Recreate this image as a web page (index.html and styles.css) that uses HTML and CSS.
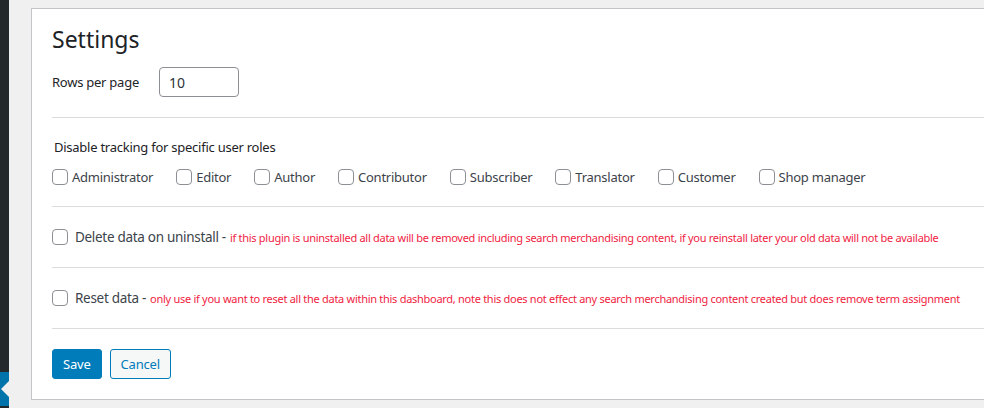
FILE: index.html
```html
<!DOCTYPE html>
<html>
<head>
<meta charset="utf-8">
<link rel="stylesheet" href="styles.css">
</head>
<body>
<div class="layout">
  <aside class="sidebar">
    <div class="sidebar-fill"></div>
    <div class="sidebar-current"><span class="arrow"></span></div>
    <div class="sidebar-foot"></div>
  </aside>
  <main class="content">
    <section class="card">
      <h1 class="title">Settings</h1>
      <div class="rows-field">
        <label class="rows-label">Rows per page</label>
        <input class="rows-input" type="text" value="10">
      </div>
      <hr class="sep">
      <div class="roles">
        <p class="roles-title">Disable tracking for specific user roles</p>
        <div class="roles-list">
          <label class="role"><span class="cb"></span>Administrator</label>
          <label class="role"><span class="cb"></span>Editor</label>
          <label class="role"><span class="cb"></span>Author</label>
          <label class="role"><span class="cb"></span>Contributor</label>
          <label class="role"><span class="cb"></span>Subscriber</label>
          <label class="role"><span class="cb"></span>Translator</label>
          <label class="role"><span class="cb"></span>Customer</label>
          <label class="role"><span class="cb"></span>Shop manager</label>
        </div>
      </div>
      <hr class="sep">
      <div class="option"><span class="cb cb-lg"></span><span class="opt-label">Delete data on uninstall -</span><span class="warn">if this plugin is uninstalled all data will be removed including search merchandising content, if you reinstall later your old data will not be available</span></div>
      <hr class="sep">
      <div class="option"><span class="cb cb-lg"></span><span class="opt-label">Reset data -</span><span class="warn">only use if you want to reset all the data within this dashboard, note this does not effect any search merchandising content created but does remove term assignment</span></div>
      <hr class="sep">
      <div class="actions">
        <button class="btn btn-primary">Save</button>
        <button class="btn btn-secondary">Cancel</button>
      </div>
    </section>
  </main>
</div>
</body>
</html>
```
FILE: styles.css
```css
html, body {
  margin: 0;
  padding: 0;
  height: 100%;
  overflow: hidden;
  background: #f0f0f1;
  font-family: "Noto Sans", "Open Sans", sans-serif;
  color: #3c434a;
}
.layout {
  display: flex;
  height: 408px;
}
.sidebar {
  width: 9px;
  flex: none;
  display: flex;
  flex-direction: column;
  background: #23282d;
}
.sidebar-fill { flex: 1; }
.sidebar-current {
  height: 34px;
  background: #0073aa;
  position: relative;
}
.sidebar-foot { height: 2px; }
.sidebar-current .arrow {
  position: absolute;
  left: 1px;
  top: 9px;
  width: 0;
  height: 0;
  border-top: 8px solid transparent;
  border-bottom: 8px solid transparent;
  border-right: 8px solid #f0f0f1;
}
.content {
  flex: 1;
  padding: 8px 0 0 22px;
  min-width: 0;
}
.card {
  width: 1100px;
  height: 392px;
  box-sizing: border-box;
  background: #fff;
  border: 1px solid #c3c4c7;
  padding: 14px 0 0 20px;
}
.title {
  margin: 0;
  font-size: 23px;
  font-weight: 400;
  color: #1d2327;
  line-height: 32px;
}
.rows-field {
  display: flex;
  align-items: center;
  margin-top: 12px;
}
.rows-label {
  font-size: 13px;
  letter-spacing: -0.25px;
  width: 107px;
  color: #1d2327;
}
.rows-input {
  width: 80px;
  height: 30px;
  box-sizing: border-box;
  border: 1px solid #8c8f94;
  border-radius: 4px;
  padding: 0 9px;
  font-family: inherit;
  font-size: 14px;
  color: #2c3338;
}
.sep {
  border: 0;
  border-top: 1px solid #dcdcde;
  margin: 0;
}
.rows-field + .sep { margin-top: 20px; }
.roles { padding: 20px 0 20px 0; }
.roles-title {
  margin: 0 0 0 2px;
  font-size: 13px;
  letter-spacing: -0.25px;
  color: #1d2327;
  line-height: 18px;
}
.roles-list {
  display: flex;
  margin-top: 12px;
}
.role {
  display: flex;
  align-items: center;
  font-size: 13px;
  letter-spacing: -0.25px;
  color: #3c434a;
  margin-right: 23px;
}
.cb {
  width: 16px;
  height: 16px;
  box-sizing: border-box;
  border: 1px solid #8c8f94;
  border-radius: 4px;
  background: #fff;
  margin-right: 4px;
  flex: none;
}
.option {
  display: flex;
  align-items: center;
  height: 60px;
}
.cb-lg { margin-right: 7px; }
.opt-label {
  font-size: 13.5px;
  letter-spacing: -0.3px;
  color: #3c434a;
  margin-right: 4px;
}
.warn {
  font-size: 11px;
  letter-spacing: -0.28px;
  color: #f0233f;
  white-space: nowrap;
}
.actions {
  display: flex;
  gap: 8px;
  padding-top: 20px;
}
.btn {
  height: 30px;
  box-sizing: border-box;
  border-radius: 3px;
  font-family: inherit;
  font-size: 13px;
  letter-spacing: -0.2px;
  padding: 0 10px;
  cursor: pointer;
}
.btn-primary {
  background: #007cba;
  border: 1px solid #007cba;
  color: #fff;
}
.btn-secondary {
  background: #f6f7f7;
  border: 1px solid #007cba;
  color: #007cba;
}
```
